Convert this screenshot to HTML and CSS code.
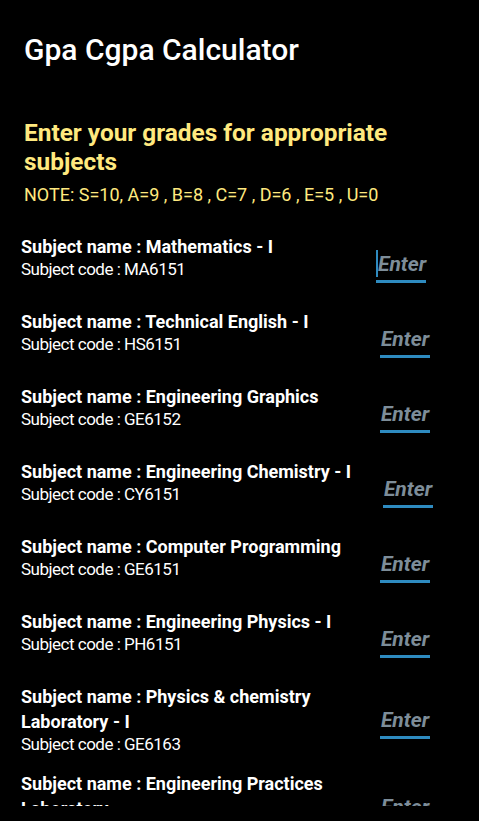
FILE: index.html
```
<!DOCTYPE html>
<html lang="en">
<head>
	<meta charset="UTF-8">
	<title>Gpa Cgpa Calculator</title>
	<link rel="stylesheet" href="styles.css">
</head>
<body>
	<div class="app">
		<div class="appbar">Gpa Cgpa Calculator</div>
		<div class="intro">
			<h2>Enter your grades for appropriate subjects</h2>
			<p>NOTE: S=10, A=9 , B=8 , C=7 , D=6 , E=5 , U=0</p>
		</div>
		<ul class="subjects">
			<li class="row">
				<div class="info">
					<div class="name">Subject name : Mathematics - I</div>
					<div class="code">Subject code : MA6151</div>
				</div>
				<div class="field focus"><span class="cursor"></span>Enter</div>
			</li>
			<li class="row">
				<div class="info">
					<div class="name">Subject name : Technical English - I</div>
					<div class="code">Subject code : HS6151</div>
				</div>
				<div class="field">Enter</div>
			</li>
			<li class="row">
				<div class="info">
					<div class="name">Subject name : Engineering Graphics</div>
					<div class="code">Subject code : GE6152</div>
				</div>
				<div class="field">Enter</div>
			</li>
			<li class="row">
				<div class="info">
					<div class="name">Subject name : Engineering Chemistry - I</div>
					<div class="code">Subject code : CY6151</div>
				</div>
				<div class="field right">Enter</div>
			</li>
			<li class="row">
				<div class="info">
					<div class="name">Subject name : Computer Programming</div>
					<div class="code">Subject code : GE6151</div>
				</div>
				<div class="field">Enter</div>
			</li>
			<li class="row">
				<div class="info">
					<div class="name">Subject name : Engineering Physics - I</div>
					<div class="code">Subject code : PH6151</div>
				</div>
				<div class="field">Enter</div>
			</li>
			<li class="row">
				<div class="info">
					<div class="name">Subject name : Physics &amp; chemistry Laboratory - I</div>
					<div class="code">Subject code : GE6163</div>
				</div>
				<div class="field">Enter</div>
			</li>
			<li class="row">
				<div class="info">
					<div class="name">Subject name : Engineering Practices Laboratory</div>
					<div class="code">Subject code : GE6162</div>
				</div>
				<div class="field">Enter</div>
			</li>
		</ul>
	</div>
</body>
</html>
```

FILE: styles.css
```
*{
	margin: 0;
	padding: 0;
}
ul{
	list-style: none;
}
body{
	background: #000;
	font-family: Roboto, "Liberation Sans", sans-serif;
	color: #fff;
}
.app{
	width: 479px;
	height: 821px;
	overflow: hidden;
}
.appbar{
	padding: 32px 24px 0;
	font-size: 30px;
	font-weight: 500;
	line-height: 36px;
}
.intro{
	padding: 50px 24px 0;
	color: #ffe97f;
}
.intro h2{
	font-size: 24.4px;
	font-weight: 700;
	line-height: 29px;
}
.intro p{
	font-size: 18px;
	line-height: 24px;
	margin-top: 7px;
}
.subjects{
	margin-top: 27px;
	height: 572px;
	overflow: hidden;
}
.row{
	display: flex;
	align-items: center;
	padding: 0 49px 16px 21px;
}
.info{
	flex: 1;
	min-width: 0;
	align-self: flex-start;
}
.name{
	font-size: 18px;
	font-weight: 700;
	line-height: 25px;
}
.code{
	font-size: 17px;
	letter-spacing: -0.5px;
	line-height: 21px;
}
.field{
	position: relative;
	margin: 16px 0 10px 20px;
	padding-bottom: 2px;
	width: 50px;
	font-size: 21px;
	font-weight: 700;
	font-style: italic;
	line-height: 28px;
	color: #7d8d99;
	border-bottom: 3px solid #2e8bc0;
	text-align: center;
}
.field.focus{
	margin-right: 4px;
	text-align: left;
	padding-left: 2px;
	width: 48px;
}
.field.right{
	margin-right: -3px;
}
.cursor{
	position: absolute;
	left: 0;
	top: 0;
	width: 2px;
	height: 27px;
	background: #2e8bc0;
}
```
